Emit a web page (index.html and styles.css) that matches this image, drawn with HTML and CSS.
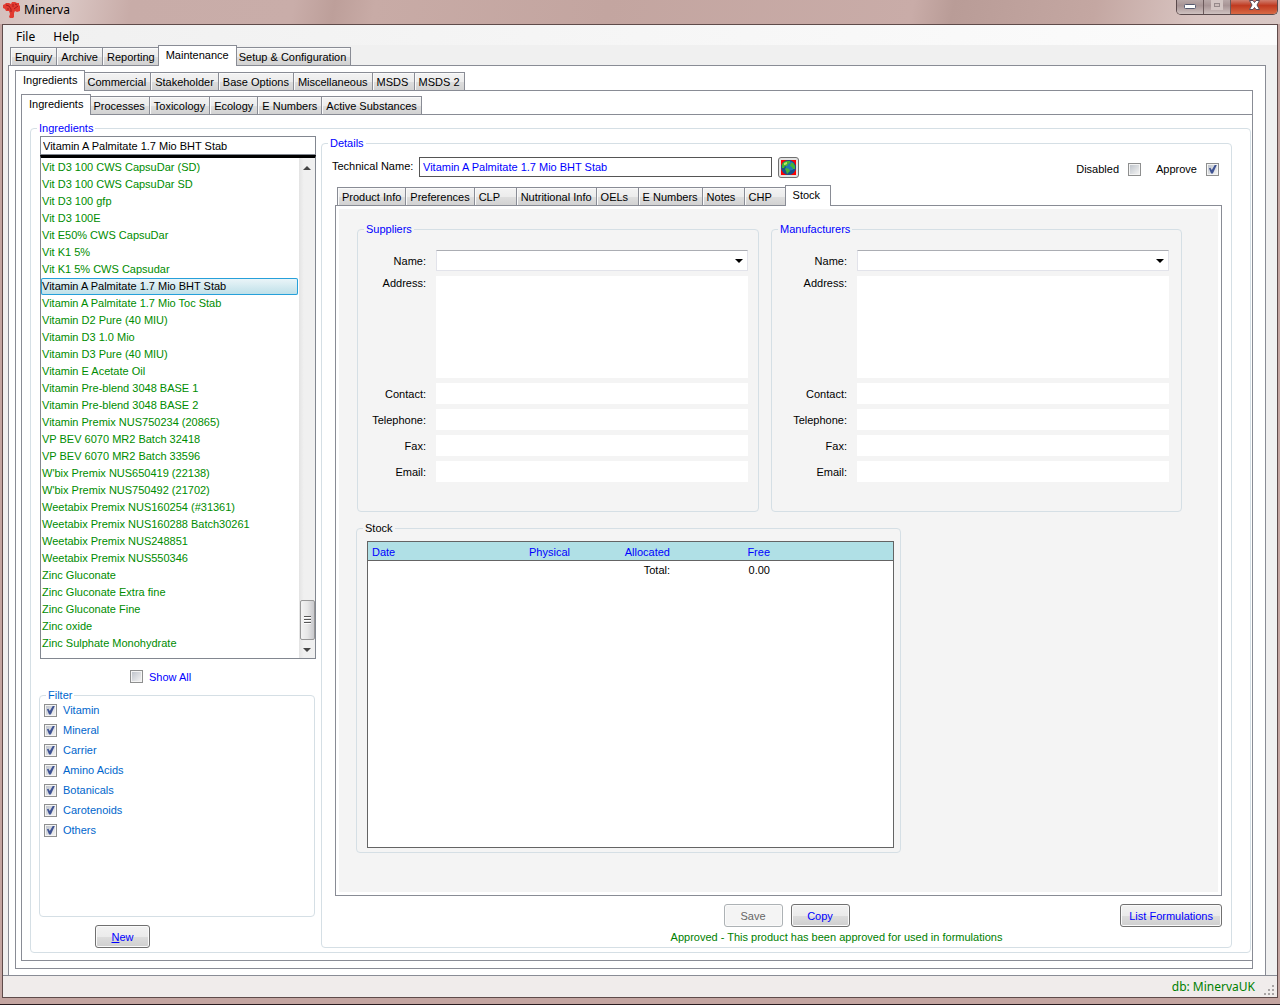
FILE: index.html
```html
<!DOCTYPE html>
<html lang="en">
<head>
    <meta charset="UTF-8">
    <meta name="viewport" content="width=device-width, initial-scale=1.0">
    <title>Minerva</title>
    <link rel="stylesheet" href="styles.css">
</head>
<body>

    <!-- Title bar -->
    <header class="titlebar">
        <svg class="logo" width="18" height="18" viewBox="0 0 18 18" aria-hidden="true">
            <path fill="#e23a30" d="M0 4l2-1 1-1h3l2 1 1-2h3l2 1h2v2l1 1v5l-3 1-2-1-1 2v4l-1 1H7l-1-1 1-3-1-3-3 0-1-2-2-1z"/>
            <path fill="none" stroke="#a51c1c" d="M3 4l3 1 2 3v3M15 5l-4 3M10 3v3M12 3l2 1M4 8l2 0"/>
        </svg>
        <span class="title">Minerva</span>
        <div class="window-buttons">
            <button aria-label="Minimize"><svg width="26" height="14" viewBox="1 0 26 14"><rect x="8.500" y="4.500" width="11" height="4" rx="1" fill="#fff" stroke="#555a70"/></svg></button>
            <button aria-label="Maximize" disabled><svg width="26" height="14" viewBox="0 0 26 14"><rect x="8.500" y="1.500" width="9" height="7" fill="none" stroke="#d3c6c4" stroke-width="3"/><rect x="10.500" y="3.500" width="5" height="3" fill="#cbbcba" stroke="#95898a"/></svg></button>
            <button class="close" aria-label="Close"><svg width="46" height="14" viewBox="0 0 46 14"><path d="M18.500 .5h3.500l1.500 2 1.500-2h3.500l-2.500 4.500 2.500 4.500h-3.500l-1.500-2-1.500 2h-3.500l2.500-4.500z" fill="#fff" stroke="#5c4a58"/></svg></button>
        </div>
    </header>

    <div class="client">
        <nav class="menu">
            <button>File</button>
            <button>Help</button>
        </nav>

        <div class="tabs tabs-main" role="tablist">
            <button role="tab">Enquiry</button>
            <button role="tab">Archive</button>
            <button role="tab">Reporting</button>
            <button role="tab" class="active" aria-selected="true">Maintenance</button>
            <button role="tab">Setup &amp; Configuration</button>
        </div>
        <div class="page page-main">
            <div class="tabs" role="tablist">
                <button role="tab" class="active" aria-selected="true">Ingredients</button>
                <button role="tab">Commercial</button>
                <button role="tab">Stakeholder</button>
                <button role="tab">Base Options</button>
                <button role="tab">Miscellaneous</button>
                <button role="tab">MSDS</button>
                <button role="tab">MSDS 2</button>
            </div>
            <div class="page page-section">
                <div class="tabs" role="tablist">
                    <button role="tab" class="active" aria-selected="true">Ingredients</button>
                    <button role="tab">Processes</button>
                    <button role="tab">Toxicology</button>
                    <button role="tab">Ecology</button>
                    <button role="tab">E Numbers</button>
                    <button role="tab">Active Substances</button>
                </div>
                <div class="page page-ingredients">
                    <fieldset class="group">
                        <legend>Ingredients</legend>
                        <div class="ingredients">

                            <!-- Ingredient list -->
                            <div class="sidebar">
                                <input class="search" type="text" aria-label="Search ingredients" value="Vitamin A Palmitate 1.7 Mio BHT Stab">
                                <div class="listbox">
                                    <ul role="listbox" aria-label="Ingredients">
                                        <li role="option">Vit D3 100 CWS CapsuDar (SD)</li>
                                        <li role="option">Vit D3 100 CWS CapsuDar SD</li>
                                        <li role="option">Vit D3 100 gfp</li>
                                        <li role="option">Vit D3 100E</li>
                                        <li role="option">Vit E50% CWS CapsuDar</li>
                                        <li role="option">Vit K1 5%</li>
                                        <li role="option">Vit K1 5% CWS Capsudar</li>
                                        <li role="option" class="selected" aria-selected="true">Vitamin A Palmitate 1.7 Mio BHT Stab</li>
                                        <li role="option">Vitamin A Palmitate 1.7 Mio Toc Stab</li>
                                        <li role="option">Vitamin D2 Pure (40 MIU)</li>
                                        <li role="option">Vitamin D3 1.0 Mio</li>
                                        <li role="option">Vitamin D3 Pure (40 MIU)</li>
                                        <li role="option">Vitamin E Acetate Oil</li>
                                        <li role="option">Vitamin Pre-blend 3048 BASE 1</li>
                                        <li role="option">Vitamin Pre-blend 3048 BASE 2</li>
                                        <li role="option">Vitamin Premix NUS750234 (20865)</li>
                                        <li role="option">VP BEV 6070 MR2 Batch 32418</li>
                                        <li role="option">VP BEV 6070 MR2 Batch 33596</li>
                                        <li role="option">W'bix Premix NUS650419 (22138)</li>
                                        <li role="option">W'bix Premix NUS750492 (21702)</li>
                                        <li role="option">Weetabix Premix NUS160254 (#31361)</li>
                                        <li role="option">Weetabix Premix NUS160288 Batch30261</li>
                                        <li role="option">Weetabix Premix NUS248851</li>
                                        <li role="option">Weetabix Premix NUS550346</li>
                                        <li role="option">Zinc Gluconate</li>
                                        <li role="option">Zinc Gluconate Extra fine</li>
                                        <li role="option">Zinc Gluconate Fine</li>
                                        <li role="option">Zinc oxide</li>
                                        <li role="option">Zinc Sulphate Monohydrate</li>
                                    </ul>
                                    <div class="scrollbar">
                                        <span class="arrow-up"></span>
                                        <span class="thumb"><i></i><i></i><i></i></span>
                                        <span class="arrow-down"></span>
                                    </div>
                                </div>
                                <label class="show-all"><input type="checkbox"> Show All</label>
                                <fieldset class="group filter">
                                    <legend>Filter</legend>
                                    <div class="filter-list">
                                        <label><input type="checkbox" checked> Vitamin</label>
                                        <label><input type="checkbox" checked> Mineral</label>
                                        <label><input type="checkbox" checked> Carrier</label>
                                        <label><input type="checkbox" checked> Amino Acids</label>
                                        <label><input type="checkbox" checked> Botanicals</label>
                                        <label><input type="checkbox" checked> Carotenoids</label>
                                        <label><input type="checkbox" checked> Others</label>
                                    </div>
                                </fieldset>
                                <button class="btn btn-new"><u>N</u>ew</button>
                            </div>

                            <!-- Details -->
                            <fieldset class="group details">
                                <legend>Details</legend>
                                <div class="details-body">
                                    <div class="name-row">
                                        <label for="techName">Technical Name:</label>
                                        <input class="tech-name" type="text" id="techName" value="Vitamin A Palmitate 1.7 Mio BHT Stab">
                                        <button class="globe" aria-label="Translations">
                                            <svg width="15" height="15" viewBox="0 0 15 15">
                                                <rect width="15" height="15" fill="#f00"/>
                                                <circle cx="7.500" cy="7.500" r="7.500" fill="#14508c"/>
                                                <circle cx="9" cy="6" r="4.500" fill="#2378b4"/>
                                                <path fill="#46b432" d="M1 4l2-2 3-1 3 0 0 2-2 1-1 2-2 0-1 2-2 0zM5 8l3 1 1 2-2 2-1 1-1-3-1-2zM10 3l2 0 2 3v3l-2 0-1-2-2-1z"/>
                                                <path fill="#b4eb64" d="M3 3l3-1 0 2-2 1-1 0z"/>
                                            </svg>
                                        </button>
                                        <div class="flags">
                                            <label>Disabled <input type="checkbox"></label>
                                            <label>Approve <input type="checkbox" checked></label>
                                        </div>
                                    </div>

                                    <div class="tabs tabs-details" role="tablist">
                                        <button role="tab">Product Info</button>
                                        <button role="tab">Preferences</button>
                                        <button role="tab">CLP</button>
                                        <button role="tab">Nutritional Info</button>
                                        <button role="tab">OELs</button>
                                        <button role="tab">E Numbers</button>
                                        <button role="tab">Notes</button>
                                        <button role="tab">CHP</button>
                                        <button role="tab" class="active" aria-selected="true">Stock</button>
                                    </div>
                                    <div class="page page-stock">
                                        <div class="stock-panel">
                                            <div class="contacts">
                                                <fieldset class="group">
                                                    <legend>Suppliers</legend>
                                                    <div class="contact-form">
                                                        <label for="supName">Name:</label>
                                                        <span class="combo"><select id="supName"><option></option></select></span>
                                                        <label class="top" for="supAddress">Address:</label>
                                                        <textarea id="supAddress"></textarea>
                                                        <label for="supContact">Contact:</label>
                                                        <input type="text" id="supContact">
                                                        <label for="supPhone">Telephone:</label>
                                                        <input type="text" id="supPhone">
                                                        <label for="supFax">Fax:</label>
                                                        <input type="text" id="supFax">
                                                        <label for="supEmail">Email:</label>
                                                        <input type="text" id="supEmail">
                                                    </div>
                                                </fieldset>
                                                <fieldset class="group">
                                                    <legend>Manufacturers</legend>
                                                    <div class="contact-form manufacturers">
                                                        <label for="manName">Name:</label>
                                                        <span class="combo"><select id="manName"><option></option></select></span>
                                                        <label class="top" for="manAddress">Address:</label>
                                                        <textarea id="manAddress"></textarea>
                                                        <label for="manContact">Contact:</label>
                                                        <input type="text" id="manContact">
                                                        <label for="manPhone">Telephone:</label>
                                                        <input type="text" id="manPhone">
                                                        <label for="manFax">Fax:</label>
                                                        <input type="text" id="manFax">
                                                        <label for="manEmail">Email:</label>
                                                        <input type="text" id="manEmail">
                                                    </div>
                                                </fieldset>
                                            </div>

                                            <fieldset class="group stock">
                                                <legend>Stock</legend>
                                                <div class="stock-frame">
                                                    <table>
                                                        <thead>
                                                            <tr>
                                                                <th class="date">Date</th>
                                                                <th>Physical</th>
                                                                <th>Allocated</th>
                                                                <th>Free</th>
                                                                <th class="rest"></th>
                                                            </tr>
                                                        </thead>
                                                        <tbody>
                                                            <tr>
                                                                <td></td>
                                                                <td></td>
                                                                <td>Total:</td>
                                                                <td>0.00</td>
                                                                <td></td>
                                                            </tr>
                                                        </tbody>
                                                    </table>
                                                </div>
                                            </fieldset>
                                        </div>
                                    </div>

                                    <div class="actions">
                                        <div class="actions-center">
                                            <button class="btn" disabled>Save</button>
                                            <button class="btn">Copy</button>
                                        </div>
                                        <button class="btn btn-list">List Formulations</button>
                                    </div>
                                    <p class="approved">Approved - This product has been approved for used in formulations</p>
                                </div>
                            </fieldset>
                        </div>
                    </fieldset>
                </div>
            </div>
        </div>

        <!-- Status bar -->
        <footer class="statusbar">
            <span>db: MinervaUK</span>
            <svg width="12" height="12" viewBox="0 0 12 12" fill="#a8a4a4" aria-hidden="true">
                <path d="M9 0h2v2H9zM9 4h2v2H9zM9 8h2v2H9zM5 4h2v2H5zM5 8h2v2H5zM1 8h2v2H1z"/>
            </svg>
        </footer>
    </div>

</body>
</html>
```
FILE: styles.css
```css
* {
    box-sizing: border-box;
}
body {
    margin: 0;
    min-height: 100vh;
    padding: 0 2px 6px;
    display: flex;
    flex-direction: column;
    font-family: "Liberation Sans", Arial, sans-serif;
    font-size: 11px;
    line-height: 14px;
    color: #000;
    background-color: #c4a5a1;
    border-bottom: 1px solid #2a1c20;
}
button, input, select, textarea {
    font: inherit;
    color: inherit;
    margin: 0;
}
button {
    padding: 0;
    white-space: nowrap;
}

/* Title bar */
.titlebar {
    display: flex;
    align-items: flex-start;
    height: 24px;
    margin: 0 -2px;
    padding: 0 2px 0 3px;
    background: linear-gradient(100deg, #d5c0bd 0, #dcc9c6 60px, #c8aca8 130px, #c9ada9 290px, #bd9f9a 330px, #c8aba6 370px, #c3a5a0 600px, #c9aca8 900px, #b99c97 940px, #c4a7a2 1080px, #d8c4c1 1180px, #d9c8c5 1280px);
}
.logo {
    margin-top: 1px;
}
.title {
    font-family: "Noto Sans", "Open Sans", sans-serif;
    font-size: 12px;
    line-height: 20px;
    margin-left: 3px;
}
.window-buttons {
    display: flex;
    margin-left: auto;
    border: 1px solid #5a4a4c;
    border-top: none;
    border-radius: 0 0 5px 5px;
    overflow: hidden;
}
.window-buttons button {
    border: none;
    border-right: 1px solid #6c5a5c;
    height: 14px;
    background: linear-gradient(#b8a8a8, #a79495 40%, #cfc2c0);
}
.window-buttons svg {
    display: block;
}
.window-buttons .close {
    border-right: none;
    background: linear-gradient(#d08070, #c03a20 40%, #d86a45);
}

.client {
    flex: 1;
    display: flex;
    flex-direction: column;
    border: 1px solid #5f4b4a;
    background-color: #f0f0f0;
}
.menu {
    height: 20px;
    padding-left: 8px;
    background: linear-gradient(to right, #f0f0f0, #fcfcfc);
}
.menu button {
    font-family: "Noto Sans", "Open Sans", sans-serif;
    font-size: 12px;
    line-height: 24px;
    border: none;
    background: none;
    padding: 0 5px;
    margin-right: 5px;
}

/* Tabs */
.tabs {
    display: flex;
    align-items: flex-end;
    height: 21px;
    margin-bottom: -1px;
    padding-left: 2px;
    position: relative;
}
.tabs button {
    height: 19px;
    min-width: 42px;
    padding: 0 4px;
    text-align: left;
    border: 1px solid #898c95;
    border-left-width: 0;
    background: linear-gradient(#f3f3f3, #ececec 50%, #dedede 51%, #d2d2d2);
    box-shadow: inset 1px 1px #fafafa;
}
.tabs button:first-child {
    border-left-width: 1px;
}
.tabs .active {
    height: 21px;
    margin: 0 -2px;
    padding: 0 7px 2px;
    border-left-width: 1px;
    border-bottom: none;
    background: #fff;
    box-shadow: none;
    position: relative;
}
.tabs-main {
    margin-left: 5px;
}
.page {
    flex: 1;
    display: flex;
    flex-direction: column;
    border: 1px solid #898c95;
    background-color: #fff;
}
.page-main {
    margin: 0 11px 0 5px;
    padding: 4px 12px 6px 6px;
    border-bottom: none;
}
.page-section {
    padding: 3px 0 7px 5px;
}
.page-ingredients {
    padding: 6px 1px 7px 8px;
    border-right: none;
}

/* Group boxes */
.group {
    display: flex;
    flex-direction: column;
    flex: 1;
    min-width: 0;
    margin: 0;
    padding: 0;
    border: 1px solid #d5dfe5;
    border-radius: 4px;
}
.group > legend {
    margin-left: 6px;
    padding: 0 2px;
    color: #00f;
}
.ingredients {
    display: flex;
    gap: 5px;
    padding: 1px 18px 4px 9px;
}

/* Left side */
.sidebar {
    width: 276px;
    display: flex;
    flex-direction: column;
}
.search {
    height: 19px;
    padding: 0 2px;
    border: 1px solid #828790;
    background-color: #fff;
}
.listbox {
    display: flex;
    border: 1px solid #828790;
    border-top: 3px solid #000;
}
.listbox ul {
    flex: 1;
    list-style: none;
    margin: 0;
    padding: 1px 1px 6px 0;
    color: #008c00;
}
.listbox li {
    height: 17px;
    line-height: 17px;
    padding-left: 1px;
    white-space: nowrap;
}
.listbox .selected {
    color: #000;
    border-radius: 2px;
    background: linear-gradient(#edf6f9, #bcdfe8);
    box-shadow: inset 0 0 0 1px #26a0da;
}
.scrollbar {
    width: 16px;
    display: flex;
    flex-direction: column;
    align-items: center;
    padding: 8px 0 6px;
    background: linear-gradient(to right, #e3e3e3, #f0f0f0 30%);
}
.arrow-up, .arrow-down {
    border: 4px solid transparent;
    border-top: none;
    border-bottom-color: #444;
}
.arrow-down {
    border-top: 4px solid #444;
    border-bottom: none;
    margin-top: 8px;
}
.thumb {
    width: 15px;
    height: 40px;
    margin-top: auto;
    padding: 15px 3px 0;
    border: 1px solid #979797;
    border-radius: 2px;
    background: linear-gradient(to right, #f3f3f3, #e6e6e6 50%, #c8c8cc);
}
.thumb i {
    display: block;
    height: 2px;
    margin-bottom: 1px;
    border-bottom: 1px solid #fff;
    background-color: #555;
}

input[type="checkbox"] {
    appearance: none;
    flex: none;
    width: 13px;
    height: 13px;
    border: 1px solid #8e8f8f;
    background: linear-gradient(135deg, #c0c5cc, #f2f2f2) content-box, #f4f4f4;
    padding: 1px;
}
input[type="checkbox"]:checked::after {
    content: "";
    display: block;
    width: 9px;
    height: 9px;
    background-color: #3f5393;
    clip-path: polygon(10% 42%, 26% 36%, 42% 62%, 78% 0, 100% 0, 54% 100%, 34% 100%);
}
.show-all {
    display: flex;
    align-items: center;
    gap: 6px;
    height: 13px;
    margin: 11px 0 5px 90px;
    color: #00f;
}
.filter {
    margin: 0 1px 0 -1px;
}
.filter > legend, .filter-list {
    color: #0066cc;
}
.filter-list label {
    display: flex;
    align-items: center;
    gap: 6px;
    height: 20px;
    padding-left: 4px;
}
.filter-list {
    margin-top: -2px;
}

.btn {
    height: 23px;
    min-width: 59px;
    padding: 0 8px;
    color: #00f;
    border: 1px solid #707070;
    border-radius: 3px;
    background: linear-gradient(#f2f2f2, #ebebeb 50%, #dddddd 51%, #cfcfcf);
    box-shadow: inset 0 0 0 1px #fafafa;
}
.btn:disabled {
    color: #666;
    border-color: #adb2b5;
    background: #f4f4f4;
}
.btn-new {
    min-width: 55px;
    align-self: flex-start;
    margin: 8px 0 0 55px;
}

/* Details */
.details-body {
    flex: 1;
    display: flex;
    flex-direction: column;
    padding: 6px 9px 3px 13px;
}
.name-row {
    display: flex;
    align-items: center;
    height: 22px;
    margin: 0 3px 7px -3px;
}
.name-row > label {
    width: 87px;
    line-height: 16px;
    padding-bottom: 2px;
}
.tech-name {
    width: 353px;
    height: 20px;
    padding: 0 3px;
    color: #00f;
    border: 1px solid #555;
    background-color: #fff;
}
.globe {
    display: flex;
    align-items: center;
    justify-content: center;
    width: 21px;
    height: 21px;
    margin-left: 6px;
    border: 1px solid #707070;
    border-radius: 3px;
    background-color: #e4e4e4;
}
.flags {
    display: flex;
    gap: 15px;
    margin-left: auto;
    padding-top: 4px;
}
.flags label {
    display: flex;
    align-items: center;
    gap: 9px;
}
.page-stock {
    padding: 3px;
}
.tabs-details .active {
    min-width: 46px;
}
.stock-panel {
    flex: 1;
    display: flex;
    flex-direction: column;
    gap: 9px;
    padding: 13px 36px 39px 17px;
    background-color: #f4f4f4;
}
.contacts {
    display: grid;
    grid-template-columns: 402fr 411fr;
    gap: 12px;
    padding-left: 1px;
}
.contact-form {
    display: grid;
    grid-template-columns: 58px 1fr;
    gap: 5px 10px;
    padding: 14px 10px 29px;
    align-items: center;
}
.contact-form.manufacturers {
    padding-left: 17px;
    padding-right: 12px;
}
.contact-form label {
    text-align: right;
}
.contact-form .top {
    align-self: start;
}
.contact-form input, .contact-form textarea, .contact-form select {
    display: block;
    width: 100%;
    height: 21px;
    padding: 0 3px;
    border: none;
    border-radius: 0;
    background-color: #fff;
    resize: none;
}
.contact-form textarea {
    height: 102px;
}
.contact-form select {
    appearance: none;
    border: 1px solid #e2e3ea;
    border-top-color: #abadb3;
}
.combo {
    position: relative;
}
.combo::after {
    content: "";
    position: absolute;
    right: 5px;
    top: 9px;
    border: 4px solid transparent;
    border-top-color: #000;
    border-bottom: none;
    pointer-events: none;
}

.stock {
    width: 545px;
}
.stock > legend {
    color: #000;
}
.stock-frame {
    flex: 1;
    min-height: 307px;
    margin: 6px 6px 4px 10px;
    border: 1px solid #646464;
    background-color: #fff;
}
.stock table {
    width: 100%;
    table-layout: fixed;
    border-collapse: collapse;
}
.stock th, .stock td {
    width: 100px;
    height: 18px;
    padding: 2px 0 0 4px;
    font-weight: normal;
    text-align: right;
}
.stock th {
    color: #00f;
    background-color: #b0e0e6;
    border-bottom: 1px solid #646464;
}
.stock .date {
    width: 102px;
    text-align: left;
}
.stock .rest {
    width: auto;
}

.actions {
    display: grid;
    grid-template-columns: 1fr auto 1fr;
    margin-top: 8px;
    padding-left: 16px;
}
.actions-center {
    grid-column: 2;
    display: flex;
    gap: 8px;
}
.btn-list {
    justify-self: end;
}
.approved {
    margin: 3px 0 0;
    padding-left: 116px;
    text-align: center;
    color: #008000;
}

.statusbar {
    display: flex;
    align-items: center;
    justify-content: flex-end;
    gap: 8px;
    height: 22px;
    padding-right: 2px;
    font-family: "Noto Sans", "Open Sans", sans-serif;
    font-size: 12px;
    color: #008000;
    border-top: 1px solid #898c95;
    background-color: #f0eceb;
}
.statusbar svg {
    align-self: flex-end;
}
```
